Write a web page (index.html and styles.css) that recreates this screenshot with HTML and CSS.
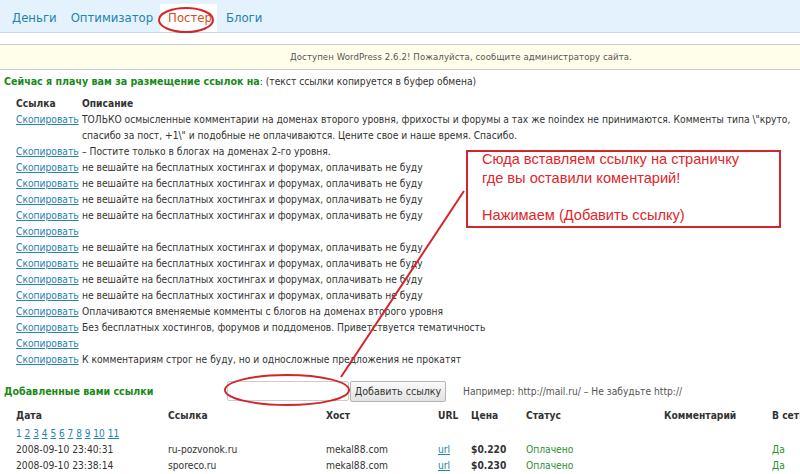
FILE: index.html
```html
<!DOCTYPE html>
<html lang="ru">
<head>
<meta charset="utf-8">
<title>Постер</title>
<link rel="stylesheet" href="styles.css">
</head>
<body>
<div class="page">
  <div class="topbar">
    <nav class="tabs">
      <a class="tab" href="#">Деньги</a>
      <a class="tab" href="#">Оптимизатор</a>
      <a class="tab active" href="#">Постер</a>
      <a class="tab" href="#">Блоги</a>
    </nav>
  </div>
  <div class="nag">Доступен WordPress 2.6.2! Пожалуйста, сообщите администратору сайта.</div>

  <div class="content">
    <p class="intro"><b class="green">Сейчас я плачу вам за размещение ссылок на</b>: (текст ссылки копируется в буфер обмена)</p>

    <table class="offers">
      <thead>
        <tr><th class="c-link">Ссылка</th><th>Описание</th></tr>
      </thead>
      <tbody>
        <tr><td class="c-link"><a href="#">Скопировать</a></td><td>ТОЛЬКО осмысленные комментарии на доменах второго уровня, фрихосты и форумы а тах же noindex не принимаются. Комменты типа \"круто, спасибо за пост, +1\" и подобные не оплачиваются. Цените свое и наше время. Спасибо.</td></tr>
        <tr><td class="c-link"><a href="#">Скопировать</a></td><td>– Постите только в блогах на доменах 2-го уровня.</td></tr>
        <tr><td class="c-link"><a href="#">Скопировать</a></td><td>не вешайте на бесплатных хостингах и форумах, оплачивать не буду</td></tr>
        <tr><td class="c-link"><a href="#">Скопировать</a></td><td>не вешайте на бесплатных хостингах и форумах, оплачивать не буду</td></tr>
        <tr><td class="c-link"><a href="#">Скопировать</a></td><td>не вешайте на бесплатных хостингах и форумах, оплачивать не буду</td></tr>
        <tr><td class="c-link"><a href="#">Скопировать</a></td><td>не вешайте на бесплатных хостингах и форумах, оплачивать не буду</td></tr>
        <tr><td class="c-link"><a href="#">Скопировать</a></td><td></td></tr>
        <tr><td class="c-link"><a href="#">Скопировать</a></td><td>не вешайте на бесплатных хостингах и форумах, оплачивать не буду</td></tr>
        <tr><td class="c-link"><a href="#">Скопировать</a></td><td>не вешайте на бесплатных хостингах и форумах, оплачивать не буду</td></tr>
        <tr><td class="c-link"><a href="#">Скопировать</a></td><td>не вешайте на бесплатных хостингах и форумах, оплачивать не буду</td></tr>
        <tr><td class="c-link"><a href="#">Скопировать</a></td><td>не вешайте на бесплатных хостингах и форумах, оплачивать не буду</td></tr>
        <tr><td class="c-link"><a href="#">Скопировать</a></td><td>Оплачиваются вменяемые комменты с блогов на доменах второго уровня</td></tr>
        <tr><td class="c-link"><a href="#">Скопировать</a></td><td>Без бесплатных хостингов, форумов и поддоменов. Приветствуется тематичность</td></tr>
        <tr><td class="c-link"><a href="#">Скопировать</a></td><td></td></tr>
        <tr><td class="c-link"><a href="#">Скопировать</a></td><td>К комментариям строг не буду, но и односложные предложения не прокатят</td></tr>
      </tbody>
    </table>

    <form class="addform" action="#">
      <b class="green addtitle">Добавленные вами ссылки</b>
      <input class="urlinput" type="text">
      <button class="addbtn" type="button">Добавить ссылку</button>
      <span class="hint">Например: http://mail.ru/ – Не забудьте http://</span>
    </form>

    <table class="added">
      <thead>
        <tr>
          <th class="w-date">Дата</th>
          <th class="w-link">Ссылка</th>
          <th class="w-host">Хост</th>
          <th class="w-url">URL</th>
          <th class="w-price">Цена</th>
          <th class="w-status">Статус</th>
          <th class="w-comment">Комментарий</th>
          <th class="w-net">В сети</th>
        </tr>
      </thead>
      <tbody>
        <tr><td colspan="8" class="pager"><span>1</span> <a href="#">2</a> <a href="#">3</a> <a href="#">4</a> <a href="#">5</a> <a href="#">6</a> <a href="#">7</a> <a href="#">8</a> <a href="#">9</a> <a href="#">10</a> <a href="#">11</a></td></tr>
        <tr>
          <td>2008-09-10 23:40:31</td><td>ru-pozvonok.ru</td><td>mekal88.com</td><td><a href="#">url</a></td><td><b>$0.220</b></td><td class="ok">Оплачено</td><td></td><td class="ok">Да</td>
        </tr>
        <tr>
          <td>2008-09-10 23:38:14</td><td>sporeco.ru</td><td>mekal88.com</td><td><a href="#">url</a></td><td><b>$0.230</b></td><td class="ok">Оплачено</td><td></td><td class="ok">Да</td>
        </tr>
      </tbody>
    </table>
  </div>

  <div class="note"><p class="note-text">Сюда вставляем ссылку на страничку<br>где вы оставили коментарий!<br><br>Нажимаем (Добавить ссылку)</p></div>

  <svg class="marks" width="800" height="474" viewBox="0 0 800 474">
    <ellipse cx="186" cy="20" rx="27" ry="12" fill="none" stroke="#d3262a" stroke-width="2"/>
    <ellipse cx="287" cy="390" rx="62" ry="15" fill="none" stroke="#d3262a" stroke-width="2"/>
    <line x1="464" y1="191" x2="341" y2="377" stroke="#d3262a" stroke-width="2"/>
  </svg>
</div>
</body>
</html>
```

FILE: styles.css
```css
html, body {
  margin: 0;
  padding: 0;
  overflow: hidden;
}
body {
  font-family: "DejaVu Sans Condensed", "DejaVu Sans", sans-serif;
  font-size: 10.2px;
  color: #333;
  background: #fff;
}
a { color: #2583ad; }
.page {
  position: relative;
  width: 800px;
  height: 474px;
  overflow: hidden;
}
.topbar {
  height: 32px;
  background: #e4f2fd;
  border-bottom: 1px solid #c6d9e9;
  display: flex;
  align-items: flex-end;
}
.tabs {
  display: flex;
  padding-left: 5px;
}
.tab {
  font-size: 13px;
  line-height: 16px;
  padding: 6px 7px 6px;
  color: #2583ad;
  text-decoration: none;
}
.tab.active {
  background: #fff;
  color: #d54e21;
  padding: 6px 5px 6px 8px;
}
.tab.active + .tab { padding-left: 9px; }
.nag {
  margin-top: 11px;
  height: 24px;
  line-height: 24px;
  background: #fffeeb;
  border-top: 1px solid #ccc;
  border-bottom: 1px solid #ccc;
  padding-left: 122px;
  text-align: center;
  font-size: 9.5px;
  color: #555;
  letter-spacing: 0.1px;
}
.content {
  padding: 0 4px;
}
.green { color: #188a18; }
.intro {
  margin: 3px 0 6px;
  line-height: 16px;
}
.intro b { font-size: 10.6px; }
.offers {
  border-collapse: collapse;
  margin-left: 12px;
  width: 780px;
}
.offers th, .offers td {
  padding: 0;
  line-height: 16px;
  text-align: left;
  vertical-align: top;
}
.offers .c-link {
  width: 66px;
  white-space: nowrap;
}
.addform {
  display: flex;
  align-items: center;
  margin-top: 12px;
  height: 22px;
}
.addtitle { width: 223px; font-size: 10.6px; }
.urlinput {
  box-sizing: border-box;
  width: 122px;
  height: 20px;
  border: 1px solid #ccc;
  border-radius: 2px;
  margin: 0;
  padding: 0 3px;
}
.addbtn {
  box-sizing: border-box;
  height: 21px;
  width: 96px;
  margin: 0 0 0 1px;
  padding: 0 2px;
  font: inherit;
  font-size: 10.6px;
  white-space: nowrap;
  color: #333;
  border: 1px solid #b5b5b5;
  border-radius: 2px;
  background: linear-gradient(#fafafa, #e2e2e2);
}
.hint {
  margin-left: 17px;
  color: #555;
}
.added {
  border-collapse: collapse;
  margin: 6px 0 0 12px;
  table-layout: fixed;
  width: 820px;
}
.added th, .added td {
  padding: 0;
  line-height: 16px;
  text-align: left;
  white-space: nowrap;
}
.added th { padding-bottom: 1px; }
.added .pager { line-height: 17px; }
.w-date { width: 152px; }
.w-link { width: 158px; }
.w-host { width: 112px; }
.w-url { width: 33px; }
.w-price { width: 55px; }
.w-status { width: 138px; }
.w-comment { width: 108px; }
.w-net { width: 64px; }
.pager { font-size: 10px; color: #2583ad; }
.ok { color: #2f8f2f; }
.note {
  position: absolute;
  left: 466px;
  top: 150px;
  width: 297px;
  height: 74px;
  padding: 0 0 0 14px;
  border: 2px solid #d3262a;
  font-family: "Liberation Sans", Arial, sans-serif;
  font-size: 14.6px;
  line-height: 18.5px;
  color: #e0262a;
}
.note-text { margin: -2px 0 0; }
.marks {
  position: absolute;
  left: 0;
  top: 0;
  pointer-events: none;
}
```
